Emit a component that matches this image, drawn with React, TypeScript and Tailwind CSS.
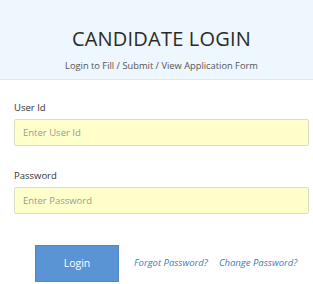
export default function App() {
  return (
    <div className="w-[313px] h-[284px] bg-white overflow-hidden font-['Open_Sans',sans-serif]">
      <div className="h-[80px] bg-[#eef6fe] border-b border-[#e3e6ea] flex flex-col items-center pt-[26px] pl-[10px]">
        <h1 className="text-[20px] leading-[26px] text-[#2b2b2b] tracking-[0.2px]">CANDIDATE LOGIN</h1>
        <p className="mt-[7px] text-[9.3px] leading-[13px] text-[#555]">Login to Fill / Submit / View Application Form</p>
      </div>
      <div className="px-[14px] pt-[21px]">
        <label className="block text-[9.5px] leading-[14px] text-[#333]">User Id</label>
        <input
          placeholder="Enter User Id"
          className="mt-[4px] w-[295px] h-[27px] px-[8px] bg-[#ffffcc] border border-[#dedbc8] rounded-[2px] text-[9.5px] placeholder:text-[#9a9a9a] outline-none"
        />
        <label className="block mt-[23px] text-[9.5px] leading-[14px] text-[#333]">Password</label>
        <input
          type="password"
          placeholder="Enter Password"
          className="mt-[4px] w-[295px] h-[27px] px-[8px] bg-[#ffffcc] border border-[#dedbc8] rounded-[2px] text-[9.5px] placeholder:text-[#9a9a9a] outline-none"
        />
        <div className="mt-[31px] flex items-center pl-[21px] whitespace-nowrap">
          <button className="w-[84px] h-[37px] bg-[#5a94d4] text-white text-[10.5px] border border-[#4f88c6]">Login</button>
          <a className="ml-[15px] text-[9.5px] italic text-[#3b7cc4]">Forgot Password?</a>
          <a className="ml-[11px] text-[9.5px] italic text-[#3b7cc4]">Change Password?</a>
        </div>
      </div>
    </div>
  );
}
